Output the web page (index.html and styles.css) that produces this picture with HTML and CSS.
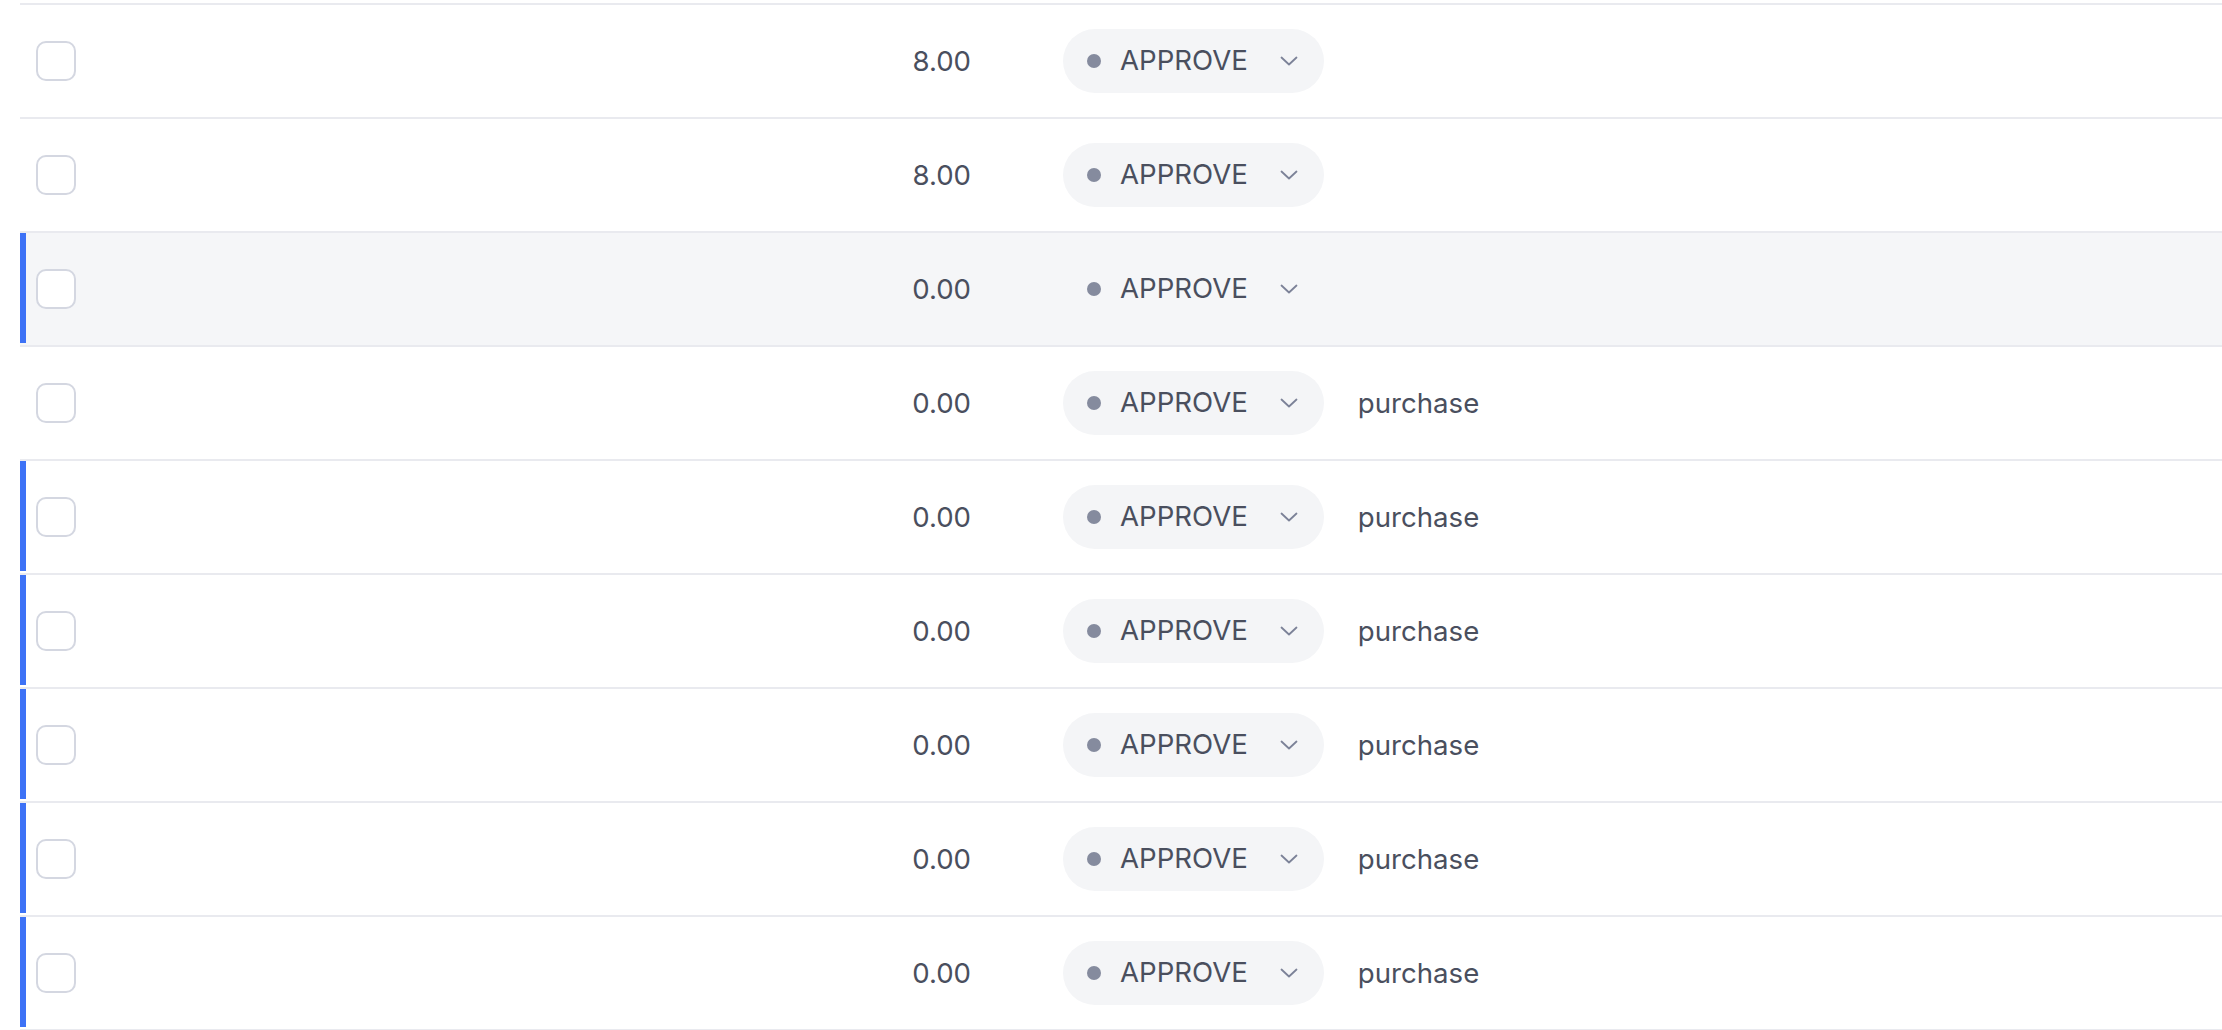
FILE: index.html
```html
<!DOCTYPE html>
<html>
<head>
<meta charset="utf-8">
<link rel="stylesheet" href="styles.css">
</head>
<body>
<div class="table">
  <div class="row">
    <div class="cell-check"><span class="checkbox"></span></div>
    <div class="cell-num">8.00</div>
    <div class="pill"><span class="dot"></span><span class="pill-text">APPROVE</span><svg class="chev" viewBox="0 0 18 10"><path d="M1.5 1.5 L9 8.5 L16.5 1.5" fill="none" stroke="#7c8298" stroke-width="1.8" stroke-linecap="round" stroke-linejoin="round"/></svg></div>
  </div>
  <div class="row">
    <div class="cell-check"><span class="checkbox"></span></div>
    <div class="cell-num">8.00</div>
    <div class="pill"><span class="dot"></span><span class="pill-text">APPROVE</span><svg class="chev" viewBox="0 0 18 10"><path d="M1.5 1.5 L9 8.5 L16.5 1.5" fill="none" stroke="#7c8298" stroke-width="1.8" stroke-linecap="round" stroke-linejoin="round"/></svg></div>
  </div>
  <div class="row row-marked row-active">
    <div class="cell-check"><span class="checkbox"></span></div>
    <div class="cell-num">0.00</div>
    <div class="pill"><span class="dot"></span><span class="pill-text">APPROVE</span><svg class="chev" viewBox="0 0 18 10"><path d="M1.5 1.5 L9 8.5 L16.5 1.5" fill="none" stroke="#7c8298" stroke-width="1.8" stroke-linecap="round" stroke-linejoin="round"/></svg></div>
  </div>
  <div class="row">
    <div class="cell-check"><span class="checkbox"></span></div>
    <div class="cell-num">0.00</div>
    <div class="pill"><span class="dot"></span><span class="pill-text">APPROVE</span><svg class="chev" viewBox="0 0 18 10"><path d="M1.5 1.5 L9 8.5 L16.5 1.5" fill="none" stroke="#7c8298" stroke-width="1.8" stroke-linecap="round" stroke-linejoin="round"/></svg></div>
    <div class="cell-type">purchase</div>
  </div>
  <div class="row row-marked">
    <div class="cell-check"><span class="checkbox"></span></div>
    <div class="cell-num">0.00</div>
    <div class="pill"><span class="dot"></span><span class="pill-text">APPROVE</span><svg class="chev" viewBox="0 0 18 10"><path d="M1.5 1.5 L9 8.5 L16.5 1.5" fill="none" stroke="#7c8298" stroke-width="1.8" stroke-linecap="round" stroke-linejoin="round"/></svg></div>
    <div class="cell-type">purchase</div>
  </div>
  <div class="row row-marked">
    <div class="cell-check"><span class="checkbox"></span></div>
    <div class="cell-num">0.00</div>
    <div class="pill"><span class="dot"></span><span class="pill-text">APPROVE</span><svg class="chev" viewBox="0 0 18 10"><path d="M1.5 1.5 L9 8.5 L16.5 1.5" fill="none" stroke="#7c8298" stroke-width="1.8" stroke-linecap="round" stroke-linejoin="round"/></svg></div>
    <div class="cell-type">purchase</div>
  </div>
  <div class="row row-marked">
    <div class="cell-check"><span class="checkbox"></span></div>
    <div class="cell-num">0.00</div>
    <div class="pill"><span class="dot"></span><span class="pill-text">APPROVE</span><svg class="chev" viewBox="0 0 18 10"><path d="M1.5 1.5 L9 8.5 L16.5 1.5" fill="none" stroke="#7c8298" stroke-width="1.8" stroke-linecap="round" stroke-linejoin="round"/></svg></div>
    <div class="cell-type">purchase</div>
  </div>
  <div class="row row-marked">
    <div class="cell-check"><span class="checkbox"></span></div>
    <div class="cell-num">0.00</div>
    <div class="pill"><span class="dot"></span><span class="pill-text">APPROVE</span><svg class="chev" viewBox="0 0 18 10"><path d="M1.5 1.5 L9 8.5 L16.5 1.5" fill="none" stroke="#7c8298" stroke-width="1.8" stroke-linecap="round" stroke-linejoin="round"/></svg></div>
    <div class="cell-type">purchase</div>
  </div>
  <div class="row row-marked">
    <div class="cell-check"><span class="checkbox"></span></div>
    <div class="cell-num">0.00</div>
    <div class="pill"><span class="dot"></span><span class="pill-text">APPROVE</span><svg class="chev" viewBox="0 0 18 10"><path d="M1.5 1.5 L9 8.5 L16.5 1.5" fill="none" stroke="#7c8298" stroke-width="1.8" stroke-linecap="round" stroke-linejoin="round"/></svg></div>
    <div class="cell-type">purchase</div>
  </div>
</div>
</body>
</html>
```
FILE: styles.css
```css
html, body {
  margin: 0;
  padding: 0;
  background: #ffffff;
  overflow: hidden;
}
body {
  font-family: Inter, "Noto Sans", sans-serif;
  color: #4a4f5e;
}
.table {
  padding: 3px 0 0 20px;
}
.row {
  position: relative;
  display: flex;
  align-items: center;
  height: 112px;
  border-top: 2px solid #e9eaef;
  background: #ffffff;
}
.row:last-child {
  border-bottom: 2px solid #e9eaef;
}
.row-active {
  background: #f5f6f8;
}
.row-marked::before {
  content: "";
  position: absolute;
  left: 0;
  top: 0;
  width: 6px;
  height: 110px;
  background: #3d72f6;
}
.cell-check {
  padding-left: 16px;
  display: flex;
  align-items: center;
}
.checkbox {
  display: block;
  width: 36px;
  height: 36px;
  border: 2px solid #d4d7e1;
  border-radius: 10px;
  background: #ffffff;
}
.cell-num {
  width: 895px;
  text-align: right;
  font-size: 27.6px;
  line-height: 1;
  padding-top: 2px;
}
.pill {
  margin-left: 92px;
  height: 64px;
  border-radius: 32px;
  background: #f4f5f7;
  display: flex;
  align-items: center;
  padding: 0 26px 0 24px;
}
.row-active .pill {
  background: transparent;
}
.dot {
  width: 14px;
  height: 14px;
  border-radius: 50%;
  background: #858b9e;
  margin-right: 19px;
}
.pill-text {
  font-size: 27.6px;
  line-height: 1;
}
.chev {
  width: 18px;
  height: 10px;
  margin-left: 32px;
}
.cell-type {
  margin-left: 34px;
  font-size: 27.6px;
  line-height: 1;
  padding-top: 2px;
}
```
